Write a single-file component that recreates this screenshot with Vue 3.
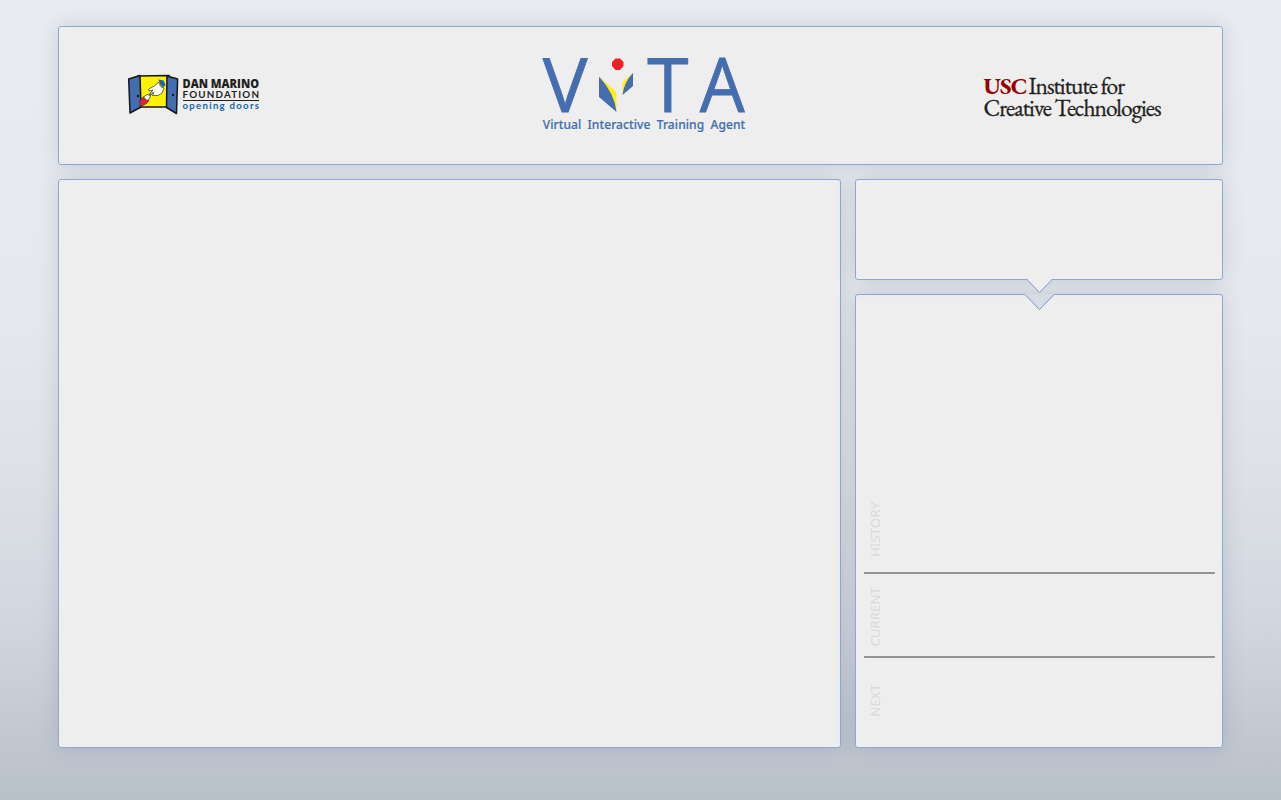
<script setup>
const stages = ['History', 'Current', 'Next']
</script>

<template>
  <div class="page">
    <header class="panel header">
      <svg class="dmf" width="136" height="46" viewBox="125 72 136 46">
        <path d="M138 76L169 75.500L168 107L140 107Z" fill="#fff200" stroke="#171717" stroke-width="1.500" />
        <path d="M128.700 79L140 75.500L141 107L130 113Z" fill="#426db1" stroke="#171717" stroke-width="1.500" stroke-linejoin="round" />
        <path d="M167 76L177.600 79L176.500 113.500L166.500 107.500Z" fill="#426db1" stroke="#171717" stroke-width="1.500" stroke-linejoin="round" />
        <path d="M158.500 79.500L163.500 80.500L165.500 85L163 87.500L160 84Z" fill="#1765aa" />
        <path d="M158.500 82L154.500 86L148.700 89L149 91L153 90L149.500 93.500L151 95L154 92.500L152.500 95.500L155 95.500L158 95.500L162 93L164 88L161 87Z" fill="#fff" stroke="#333" stroke-width=".7" stroke-linejoin="round" />
        <path d="M140 100L144 96.500L149 100.500L146.500 103.500L140 107Z" fill="#df2532" stroke="#222" stroke-width=".6" />
        <path d="M143.500 97L147 94.500L150.500 95.500L149.500 98.500L147 100.500ZM149 95L153 92" fill="#fff" stroke="#333" stroke-width=".8" stroke-linejoin="round" />
        <circle cx="138" cy="96" r="1.200" fill="#171717" /><circle cx="173" cy="95" r="1.200" fill="#171717" />
        <text x="182.500" y="88.300" font-family="Open Sans, sans-serif" font-size="13" font-weight="800" fill="#231f20" textLength="76.500" lengthAdjust="spacingAndGlyphs">DAN MARINO</text>
        <text x="182.500" y="98.200" font-family="Lato, sans-serif" font-size="9.800" font-weight="700" fill="#231f20" textLength="76.500">FOUNDATION</text>
        <text x="182.500" y="108.500" font-family="Lato, sans-serif" font-size="9.600" font-weight="700" fill="#1765aa" textLength="76.500">opening doors</text>
        <path d="M183 100.500H259" stroke="#231f20" />
      </svg>
      <svg class="vita" width="210" height="84" viewBox="540 52 210 84">
        <g font-family="Open Sans, sans-serif" font-size="75" fill="#446eb0" stroke="#446eb0" stroke-width=".8">
          <text x="542.800" y="111.700">V</text>
          <text x="647.300" y="111.700">T</text>
          <text x="699.800" y="111.700" textLength="45" lengthAdjust="spacingAndGlyphs">A</text>
        </g>
        <path d="M615.500 58.500h4.500l3.500 3.500v4l-3.500 4h-4.500l-3.500-4v-4z" fill="#ed2027" />
        <path d="M599 76.500L614.500 90L616.500 94V112Z" fill="#ffef14" />
        <path d="M599 76.500Q615 94 616.500 112L599 97Z" fill="#446eb0" />
        <path d="M633 73L622.500 82V95Z" fill="#ffef14" />
        <path d="M633 73Q624 82 622.500 95L633 86Z" fill="#446eb0" />
        <text x="542.700" y="129" font-family="Noto Sans, sans-serif" font-size="12" font-weight="500" fill="#446eb0" stroke="#446eb0" stroke-width=".2" word-spacing="3" textLength="202.500">Virtual Interactive Training Agent</text>
      </svg>
      <svg class="usc" width="182" height="54" viewBox="982 72 182 54" font-family="EB Garamond, Liberation Serif, serif" font-size="23.500">
        <text x="983.500" y="93.800" font-weight="700" fill="#990000" textLength="44">USC</text>
        <text x="1028.500" y="93.800" fill="#231f20" stroke="#231f20" stroke-width=".3" textLength="96.500">Institute for</text>
        <text x="983.500" y="115.800" fill="#231f20" stroke="#231f20" stroke-width=".3" textLength="178">Creative Technologies</text>
      </svg>
    </header>
    <main class="panel"></main>
    <aside class="side">
      <section class="panel prompt">
        <svg class="notch lower" width="30" height="17" viewBox="0 0 30 17">
          <path d="M2.500 0V1L15.500 14.500L28.500 1V0Z" fill="#eee" />
          <path d="M2.500 1L15.500 14.500L28.500 1" fill="none" stroke="#7698ca" />
        </svg>
      </section>
      <section class="panel timeline">
        <svg class="notch upper" width="32" height="18" viewBox="0 0 32 18">
          <path d="M2 0V1L16.500 16L31 1V0Z" fill="#d8dce4" />
          <path d="M2 .5L16.500 15.500L31 .5" fill="none" stroke="#7698ca" />
        </svg>
        <div v-for="s in stages" :key="s" class="stage" :class="s.toLowerCase()"><span>{{ s }}</span></div>
      </section>
    </aside>
  </div>
</template>

<style>
body { margin: 0; overflow: hidden; }
</style>
<style scoped>
* { box-sizing: border-box; }
.page {
  width: 1281px; height: 800px; padding: 26px 58px 52px;
  display: grid; grid-template-columns: 783px 368px; grid-template-rows: 139px 569px; gap: 14px;
  background: linear-gradient(#e9edf2 0%, #e5e9ee 40%, #dde1e6 60%, #d2d6df 77%, #c4cad3 90%, #b8c0ca 100%);
}
.panel { position: relative; background: #eee; border: 1px solid #8da9d2; border-radius: 3px; box-shadow: 0 0 20px rgba(90, 100, 125, .24); }
.header { grid-column: 1 / -1; display: flex; align-items: flex-start; }
.header svg { overflow: visible; }
.dmf { margin: 45px 0 0 66px; }
.vita { margin: 25px 0 0 279px; }
.usc { margin: 45px 0 0 232px; }
.side { display: grid; grid-template-rows: 101px 454px; gap: 14px; }
.notch { position: absolute; }
.prompt { z-index: 2; }
.lower { left: 168px; top: 98px; }
.upper { left: 167px; top: -1px; }
.timeline { padding: 0 7px 0 8px; display: flex; flex-direction: column; }
.stage { display: flex; align-items: flex-end; padding-left: 1px; border-bottom: 2px solid #929292; border-radius: 1px; }
.history { height: 279px; padding-bottom: 15px; }
.current { height: 84px; padding-bottom: 9px; }
.next { height: 89px; padding-bottom: 30px; border: 0; }
.stage span { writing-mode: vertical-rl; transform: rotate(180deg); width: 20px; font: 13.300px/20px "Noto Sans", sans-serif; text-transform: uppercase; color: #d9d9d9; }
</style>
